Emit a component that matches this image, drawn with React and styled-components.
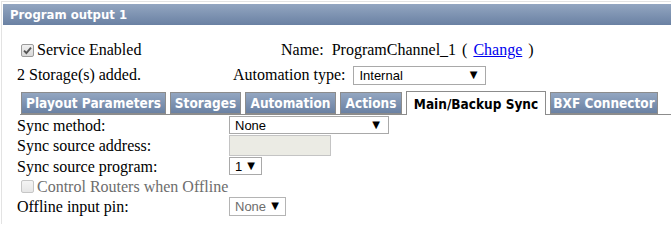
import React from "react";
import styled, { createGlobalStyle } from "styled-components";

const GlobalStyle = createGlobalStyle`
  html, body {
    margin: 0;
    padding: 0;
    background: #fff;
  }
  body {
    font-family: "Liberation Serif", "Times New Roman", serif;
    font-size: 16px;
    color: #000;
  }
`;

const Panel = styled.div`
  margin: 1px 0 0 1px;
  padding: 2px 0 0 1px;
  border-top: 1px solid #e3e3e3;
  border-left: 1px solid #e3e3e3;
  height: 223px;
  box-sizing: border-box;
`;

const Header = styled.div`
  height: 21px;
  line-height: 21px;
  padding-left: 7px;
  background: linear-gradient(#93a6c1, #6a81a3);
  color: #fff;
  font-family: "DejaVu Sans Condensed", "Liberation Sans", sans-serif;
  font-weight: bold;
  font-size: 13px;
`;

const Body = styled.div`
  padding: 14px 0 0 14px;
`;

const InfoRow = styled.div`
  display: flex;
  align-items: center;
  height: ${(p) => p.h || 24}px;
`;

const InfoCell = styled.div`
  display: flex;
  align-items: center;
  width: ${(p) => p.w}px;
  flex: none;
  white-space: nowrap;
`;

const Box = styled.span`
  display: inline-block;
  box-sizing: border-box;
  width: 13px;
  height: 13px;
  margin: 0 3px 0 4px;
  border: 1px solid ${(p) => (p.faint ? "#c6c6c6" : "#9a9a9a")};
  border-radius: 2px;
  background: ${(p) =>
    p.faint ? "linear-gradient(#f4f4f4, #e6e6e6)" : "linear-gradient(#f0f0f0, #d8d8d8)"};
  position: relative;
  svg {
    position: absolute;
    left: 1px;
    top: 1px;
  }
`;

const Check = ({ checked, faint }) => (
  <Box faint={faint}>
    {checked && (
      <svg width="9" height="9" viewBox="0 0 9 9">
        <path d="M1 4.6 L3.4 7 L8 1.6" fill="none" stroke="#555" strokeWidth="1.9" />
      </svg>
    )}
  </Box>
);

const Link = styled.a`
  color: #0000ee;
  text-decoration: underline;
  margin: 0 6px;
  cursor: pointer;
`;

const Paren = styled.span`
  margin-left: ${(p) => p.ml || 0}px;
`;

const SelectWrap = styled.div`
  position: relative;
  display: inline-block;
  width: ${(p) => p.w}px;
  height: ${(p) => p.h || 19}px;
  margin-left: ${(p) => p.ml || 0}px;
  box-sizing: border-box;
  border: 1px solid ${(p) => (p.disabled ? "#b4b4b4" : "#a9a9a9")};
  background: #fff;
  font-family: "Liberation Sans", Arial, sans-serif;
  font-size: 13px;
  color: ${(p) => (p.disabled ? "#6d6d6d" : "#000")};
`;

const SelectText = styled.span`
  position: absolute;
  left: 5px;
  top: 50%;
  transform: translateY(-50%);
  white-space: nowrap;
`;

const Arrow = styled.span`
  position: absolute;
  right: ${(p) => p.r || 8}px;
  top: 50%;
  transform: translateY(-50%);
  font-family: "DejaVu Sans", sans-serif;
  font-size: 10px;
  line-height: 1;
  color: #000;
`;

const Select = ({ w, h, ml, value, disabled, r }) => (
  <SelectWrap w={w} h={h} ml={ml} disabled={disabled}>
    <SelectText>{value}</SelectText>
    <Arrow r={r}>▼</Arrow>
  </SelectWrap>
);

const TextBox = styled.div`
  width: 102px;
  height: 21px;
  box-sizing: border-box;
  border: 1px solid #c4c4c4;
  background: #ebebe4;
`;

const TabBar = styled.div`
  display: flex;
  align-items: flex-end;
  gap: 4px;
  height: 23px;
  margin-top: 2px;
  margin-left: 3px;
  padding-left: 1px;
  border-bottom: 1px solid #8c8c8c;
  font-family: "DejaVu Sans Condensed", "Liberation Sans", sans-serif;
  font-weight: bold;
  font-size: 13.5px;
`;

const Tab = styled.div`
  box-sizing: border-box;
  width: ${(p) => p.w}px;
  height: ${(p) => (p.active ? 24 : 22)}px;
  margin-bottom: ${(p) => (p.active ? -1 : 0)}px;
  display: flex;
  align-items: center;
  justify-content: center;
  border: 1px solid #8c8c8c;
  border-bottom: ${(p) => (p.active ? "none" : "1px solid #8c8c8c")};
  background: ${(p) => (p.active ? "#fff" : "linear-gradient(#93a6c1, #6a81a3)")};
  color: ${(p) => (p.active ? "#000" : "#fff")};
  white-space: nowrap;
`;

const Form = styled.div`
  display: grid;
  grid-template-columns: 212px auto;
  grid-auto-rows: minmax(20px, auto);
  align-items: center;
  justify-items: start;
  margin-top: 0;
`;

const Label = styled.div`
  line-height: 19px;
  grid-column: ${(p) => (p.full ? "1 / span 2" : "auto")};
  display: flex;
  align-items: center;
  color: ${(p) => (p.muted ? "#6d6d6d" : "#000")};
`;

const tabs = [
  { name: "Playout Parameters", w: 145 },
  { name: "Storages", w: 71 },
  { name: "Automation", w: 91 },
  { name: "Actions", w: 62 },
  { name: "Main/Backup Sync", w: 140, active: true },
  { name: "BXF Connector", w: 108 },
];

export default function App() {
  return (
    <>
      <GlobalStyle />
      <Panel>
        <Header>Program output 1</Header>
        <Body>
          <InfoRow h={22}>
            <InfoCell w={264}>
              <Check checked />
              Service Enabled
            </InfoCell>
            <InfoCell>
              Name:&nbsp; ProgramChannel_1
              <Paren ml={6}>(</Paren>
              <Link>Change</Link>
              <Paren>)</Paren>
            </InfoCell>
          </InfoRow>
          <InfoRow h={28}>
            <InfoCell w={216}>2 Storage(s) added.</InfoCell>
            <InfoCell>
              Automation type:
              <Select w={133} ml={8} value="Internal" r={8} />
            </InfoCell>
          </InfoRow>
          <TabBar>
            {tabs.map((t) => (
              <Tab key={t.name} w={t.w} active={t.active}>
                {t.name}
              </Tab>
            ))}
          </TabBar>
          <Form>
            <Label>Sync method:</Label>
            <Select w={160} h={18} value="None" />
            <Label>Sync source address:</Label>
            <TextBox />
            <Label>Sync source program:</Label>
            <Select w={33} h={18} value="1" r={6} />
            <Label full muted>
              <Check faint />
              Control Routers when Offline
            </Label>
            <Label>Offline input pin:</Label>
            <Select w={57} h={19} value="None" disabled r={6} />
          </Form>
        </Body>
      </Panel>
    </>
  );
}
